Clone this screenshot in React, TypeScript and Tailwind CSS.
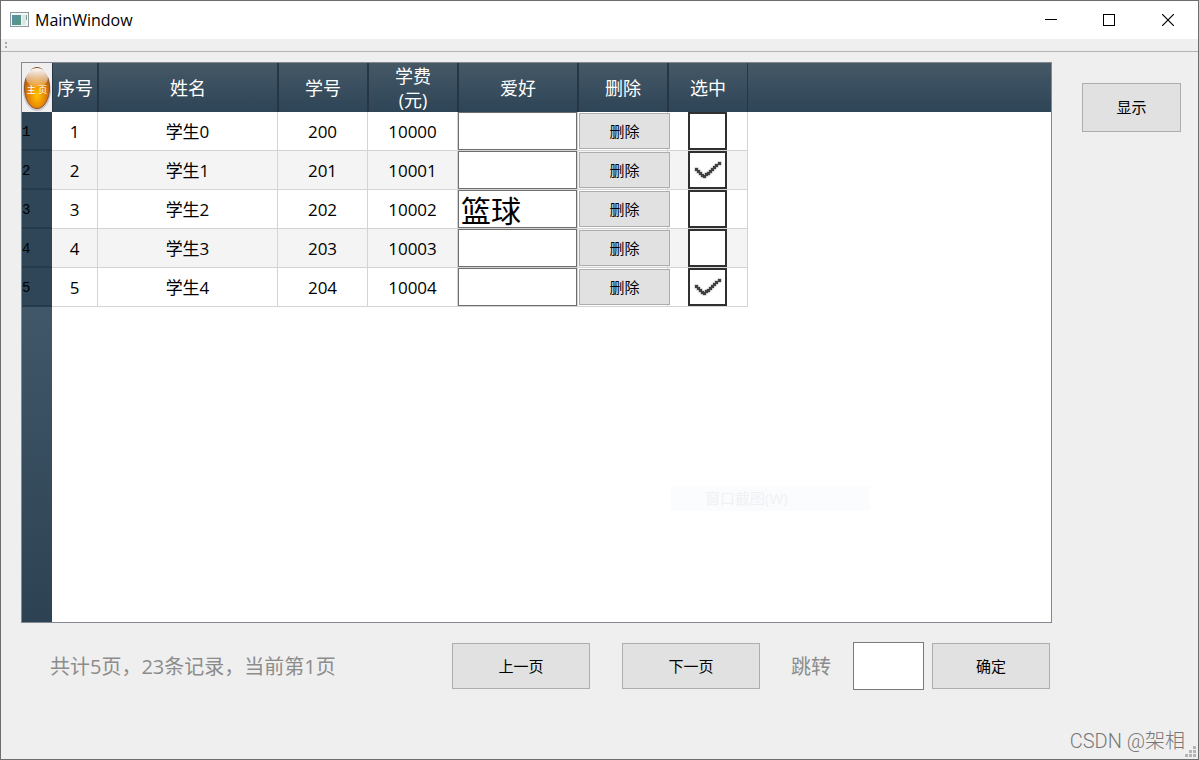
import { useState } from "react"

type Student = {
  id: number
  name: string
  number: number
  fee: number
  hobby: string
  checked: boolean
}

const initialStudents: Student[] = [
  { id: 1, name: "学生0", number: 200, fee: 10000, hobby: "", checked: false },
  { id: 2, name: "学生1", number: 201, fee: 10001, hobby: "", checked: true },
  { id: 3, name: "学生2", number: 202, fee: 10002, hobby: "篮球", checked: false },
  { id: 4, name: "学生3", number: 203, fee: 10003, hobby: "", checked: false },
  { id: 5, name: "学生4", number: 204, fee: 10004, hobby: "", checked: true },
]

const headers = ["序号", "姓名", "学号", "学费 (元)", "爱好", "删除", "选中"]

const buttonClass = "border border-[#adadad] bg-[#e1e1e1] text-[15px] text-black hover:bg-[#e5f1fb]"
const cellClass = "border-r border-b border-[#d4d4d4] p-0 text-center"
const textCellClass = "border-r border-b border-[#d4d4d4] px-0 pt-[2px] pb-0 text-center"

function AppIcon() {
  return (
    <svg width="19" height="16" viewBox="0 0 19 16" aria-hidden="true">
      <defs>
        <linearGradient id="app" x1="0" y1="0" x2="1" y2="1">
          <stop offset="0" stopColor="#5d8fa8" />
          <stop offset="1" stopColor="#4f9a7c" />
        </linearGradient>
      </defs>
      <rect x="0.5" y="0.5" width="18" height="14" fill="#f4f7f7" stroke="#8e9a9e" />
      <rect x="2" y="3" width="9" height="10" fill="url(#app)" />
      <rect x="12" y="3" width="4" height="10" fill="#dfe6e6" />
      <rect x="16" y="3" width="1" height="5" fill="#7fa695" />
    </svg>
  )
}

function HomeBadge() {
  return (
    <svg width="30" height="49" viewBox="0 0 30 49" className="block">
      <defs>
        <radialGradient id="orb" cx="0.5" cy="0.68" r="0.6">
          <stop offset="0" stopColor="#ffc400" />
          <stop offset="0.5" stopColor="#ea8a04" />
          <stop offset="1" stopColor="#b0590a" />
        </radialGradient>
        <linearGradient id="shine" x1="0" y1="0" x2="0" y2="1">
          <stop offset="0" stopColor="#fff" stopOpacity="1" />
          <stop offset="1" stopColor="#fff" stopOpacity="0.15" />
        </linearGradient>
      </defs>
      <ellipse cx="15" cy="27" rx="14" ry="21" fill="#cfc6cb" />
      <ellipse cx="15" cy="25" rx="12.5" ry="20.5" fill="url(#orb)" stroke="#8a5530" />
      <ellipse cx="15" cy="14.5" rx="11" ry="9.5" fill="url(#shine)" />
      <text x="15" y="30" textAnchor="middle" fontSize="9" fontWeight="400" fill="#fff">
        主
        {" "}
        页
      </text>
    </svg>
  )
}

const tickDots = [
  [1, 9], [3, 11], [5, 13], [7, 15], [9, 16], [11, 14], [13, 13], [15, 11], [17, 9], [19, 7], [21, 5], [24, 3],
]

function TickMark() {
  return (
    <svg
      width="28"
      height="22"
      viewBox="0 0 28 22"
      className="pointer-events-none col-start-1 row-start-1 hidden place-self-center peer-checked:block"
    >
      {tickDots.map(([x, y]) => (
        <rect key={x} x={x - 0.5} y={y - 0.5} width="4" height="4" fill="#b4b4b4" />
      ))}
      {tickDots.map(([x, y]) => (
        <rect key={x} x={x} y={y} width="3" height="3" fill="#404040" />
      ))}
    </svg>
  )
}

function TitleBar() {
  return (
    <header className="flex h-[38px] items-center bg-white pl-[9px] text-black">
      <AppIcon />
      <h1 className="flex-1 pl-[6px] font-['Open_Sans',sans-serif] text-[16px]">MainWindow</h1>
      <button aria-label="Minimize" className="grid h-full w-[58px] place-items-center">
        <svg width="12" height="12"><path d="M0 5.5H12" stroke="#000" /></svg>
      </button>
      <button aria-label="Maximize" className="grid h-full w-[58px] place-items-center">
        <svg width="12" height="12"><rect x="0.5" y="0.5" width="11" height="11" fill="none" stroke="#000" /></svg>
      </button>
      <button aria-label="Close" className="grid h-full w-[60px] place-items-center">
        <svg width="12" height="12"><path d="M0 0 12 12M12 0 0 12" stroke="#000" strokeWidth="1.2" /></svg>
      </button>
    </header>
  )
}

export default function App() {
  const [students, setStudents] = useState<Student[]>(initialStudents)
  const [page, setPage] = useState(1)
  const [target, setTarget] = useState("")

  const updateStudent = (id: number, updates: Partial<Student>) => {
    setStudents(students.map((s) => (s.id === id ? { ...s, ...updates } : s)))
  }

  const jumpTo = (n: number) => {
    if (n >= 1 && n <= 5) setPage(n)
  }

  return (
    <div className="flex min-h-screen flex-col border border-[#6e6e6e] bg-[#efefef] font-['Open_Sans','Noto_Sans_CJK_SC',sans-serif]">
      <TitleBar />

      {/* Empty toolbar with its drag handle */}
      <div className="flex h-[13px] items-center border-b border-[#b4b4b4] pl-[4px]">
        <svg width="2" height="6" fill="#a8a8a8"><rect width="2" height="2" /><rect y="4" width="2" height="2" /></svg>
      </div>

      <main className="flex flex-1 gap-[30px] pt-[10px] pr-[17px] pl-[20px]">
        <div className="flex min-w-0 flex-1 flex-col">
          <div className="relative flex flex-1 flex-col border border-[#828790] bg-white">
            <table className="w-full table-fixed border-separate border-spacing-0">
              <colgroup>
                <col className="w-[30px]" />
                <col className="w-[46px]" />
                <col className="w-[180px]" />
                <col className="w-[90px]" />
                <col className="w-[90px]" />
                <col className="w-[120px]" />
                <col className="w-[90px]" />
                <col className="w-[80px]" />
                <col />
              </colgroup>
              <thead>
                <tr className="h-[49px] text-[18px] leading-[24px] text-white">
                  <th className="bg-[#efefef] p-0"><HomeBadge /></th>
                  {headers.map((header) => (
                    <th
                      key={header}
                      className="border-x border-[#263644] bg-linear-to-b from-[#455866] to-[#2e4557] p-0 font-normal whitespace-pre-line"
                    >
                      {header.replace(" ", "\n")}
                    </th>
                  ))}
                  <td className="bg-linear-to-b from-[#455866] to-[#2e4557] p-0" />
                </tr>
              </thead>
              <tbody>
                {students.map((s) => (
                  <tr key={s.id} className="h-[39px] text-[17px] text-black even:bg-[#f4f4f4]">
                    <th className="border-b-2 border-[#263a49] bg-[#2f4658] px-0 pt-[4px] pb-0 text-left font-['Liberation_Mono',monospace] text-[14px] font-normal">
                      {s.id}
                    </th>
                    <td className={textCellClass}>{s.id}</td>
                    <td className={textCellClass}>{s.name}</td>
                    <td className={textCellClass}>{s.number}</td>
                    <td className={textCellClass}>{s.fee}</td>
                    <td className={cellClass}>
                      <input
                        type="text"
                        aria-label={`${s.name} 爱好`}
                        value={s.hobby}
                        onChange={(e) => updateStudent(s.id, { hobby: e.target.value })}
                        className="block h-[38px] w-full border border-[#6e6e6e] bg-white px-[2px] text-[30px] leading-[36px] outline-none"
                      />
                    </td>
                    <td className={cellClass}>
                      <button
                        onClick={() => setStudents(students.filter((x) => x.id !== s.id))}
                        className={`${buttonClass} ml-px block h-[36px] w-[91px]`}
                      >
                        删除
                      </button>
                    </td>
                    <td className={cellClass}>
                      <label className="mx-auto grid h-[38px] w-[39px]">
                        <input
                          type="checkbox"
                          aria-label={`${s.name} 选中`}
                          checked={s.checked}
                          onChange={(e) => updateStudent(s.id, { checked: e.target.checked })}
                          className="peer col-start-1 row-start-1 appearance-none border-2 border-[#303030] bg-white"
                        />
                        <TickMark />
                      </label>
                    </td>
                    <td className="bg-white p-0" />
                  </tr>
                ))}
              </tbody>
            </table>
            <div className="w-[30px] flex-1 bg-linear-to-b from-[#40576a] to-[#2d4353]" />
            {/* Menu item fading out over the grid */}
            <div className="absolute top-[423px] left-[649px] h-[25px] w-[199px] bg-[#fbfcfe] pl-[34px] text-[15px] leading-[25px] text-[#f0f1f4]">
              窗口截图(W)
            </div>
          </div>

          <div className="flex h-[67px] items-end pr-[2px] pl-[29px] text-[20px] text-[#8c8c8c]">
            <p className="flex h-[48px] flex-1 items-center pt-[2px]">共计5页，23条记录，当前第{page}页</p>
            <div className="flex h-[48px] items-center">
              <button onClick={() => jumpTo(page - 1)} className={`${buttonClass} h-[46px] w-[138px]`}>
                上一页
              </button>
              <button onClick={() => jumpTo(page + 1)} className={`${buttonClass} ml-[32px] h-[46px] w-[138px]`}>
                下一页
              </button>
              <label htmlFor="target" className="ml-[31px] pt-[2px]">跳转</label>
              <input
                id="target"
                type="text"
                value={target}
                onChange={(e) => setTarget(e.target.value)}
                className="ml-[22px] h-[48px] w-[71px] border border-[#7a7a7a] bg-white px-1 text-black outline-none"
              />
              <button onClick={() => jumpTo(Number(target))} className={`${buttonClass} ml-[8px] h-[46px] w-[118px]`}>
                确定
              </button>
            </div>
          </div>
        </div>

        <button className={`${buttonClass} mt-[21px] h-[49px] w-[99px]`}>显示</button>
      </main>

      <footer className="flex h-[69px] items-end justify-end pr-[2px] pb-[2px]">
        <span className="pb-[2px] font-['Roboto','Noto_Sans_CJK_SC',sans-serif] text-[20px] leading-[28px] font-light text-[#777]">
          CSDN @架相
        </span>
        <svg width="11" height="11" viewBox="0 0 11 11" fill="#b5b5b5">
          <path d="M8 0h3v3H8zM4 4h3v3H4zM8 4h3v3H8zM0 8h3v3H0zM4 8h3v3H4zM8 8h3v3H8z" />
        </svg>
      </footer>
    </div>
  )
}
